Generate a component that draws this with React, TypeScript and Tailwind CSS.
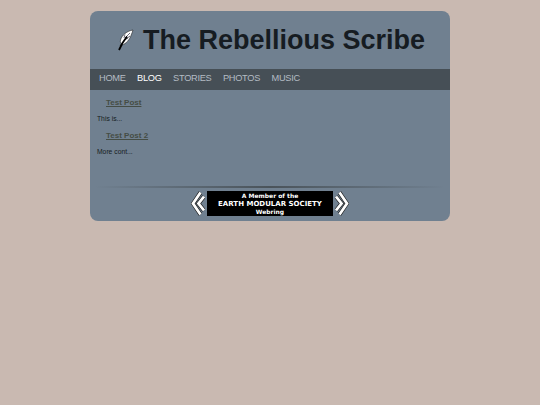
import React from 'react';

const navItems = ['HOME', 'BLOG', 'STORIES', 'PHOTOS', 'MUSIC'];

const posts = [
  { title: 'Test Post', body: 'This is...' },
  { title: 'Test Post 2', body: 'More cont...' },
];

function Quill() {
  return (
    <svg width="17" height="22" viewBox="0 0 17 22" className="shrink-0">
      <path d="M16 1C10 2 5 6 3.5 11 3 13 3.5 14 4.5 14.5L3 16.5 5 16C9 15 13 10 14 6.5 14.8 4.5 15.6 2.5 16 1Z" fill="#fff" stroke="#222" strokeWidth="0.6" />
      <path d="M13 4 8 9M11 9 7 11M8 5.5 7 9M13 7 9 10" stroke="#445" strokeWidth="0.8" fill="none" />
      <path d="M10 7.5 5.5 14 2 21" stroke="#000" strokeWidth="1.8" fill="none" />
    </svg>
  );
}

function Chevrons({ flip }: { flip?: boolean }) {
  return (
    <svg width="14" height="25" viewBox="0 0 14 25" className={flip ? 'shrink-0 -scale-x-100' : 'shrink-0'}>
      <path d="M9.5 1.5 2 12.5 9.5 23.5M13 5.5 7.5 12.5 13 19.5" fill="none" stroke="#1c1c1c" strokeWidth="4" />
      <path d="M9.5 1.5 2 12.5 9.5 23.5M13 5.5 7.5 12.5 13 19.5" fill="none" stroke="#fff" strokeWidth="2.8" />
    </svg>
  );
}

export default function App() {
  return (
    <div className="min-h-[405px] bg-[#c9b9b1] pt-[11px] font-['Liberation_Sans',Arial,sans-serif]">
      <div className="mx-auto w-[360px] h-[210px] rounded-[8px] bg-[#708090] overflow-hidden">
        {/* Header */}
        <div className="h-[58px] flex items-center pl-[27px] gap-[9px]">
          <Quill />
          <h1 className="text-[27px] leading-none font-bold text-[#161c22] whitespace-nowrap">The Rebellious Scribe</h1>
        </div>

        {/* Nav */}
        <div className="h-[21px] bg-[#464f56] flex items-center pl-[9px] pb-[1px] gap-[11.5px] text-[9.25px] tracking-[-0.3px] leading-none">
          {navItems.map((item) => (
            <span key={item} className={item === 'BLOG' ? 'text-white' : 'text-[#b4bcc4]'}>{item}</span>
          ))}
        </div>

        {/* Posts */}
        <div className="h-[96px] pl-[7px] pt-[8px]">
          {posts.map((p) => (
            <div key={p.title} className="mb-[8px]">
              <div className="pl-[9px] text-[8px] leading-[9px] font-bold underline text-[#454d45]">{p.title}</div>
              <p className="mt-[8px] text-[6.75px] leading-[8px] text-[#161c22]">{p.body}</p>
            </div>
          ))}
        </div>

        {/* Divider */}
        <div className="mx-[5px] h-[2px] bg-gradient-to-r from-transparent via-[#4a535a] to-transparent" />

        {/* Webring */}
        <div className="mt-[3px] flex justify-center items-center gap-[2px]">
          <Chevrons />
          <div className="w-[126px] h-[25px] bg-black text-white flex flex-col items-center justify-center font-['DejaVu_Sans',sans-serif] font-bold text-[6px] leading-[8px]">
            <span>A Member of the</span>
            <span className="text-[7px]">EARTH MODULAR SOCIETY</span>
            <span>Webring</span>
          </div>
          <Chevrons flip />
        </div>
      </div>
    </div>
  );
}
